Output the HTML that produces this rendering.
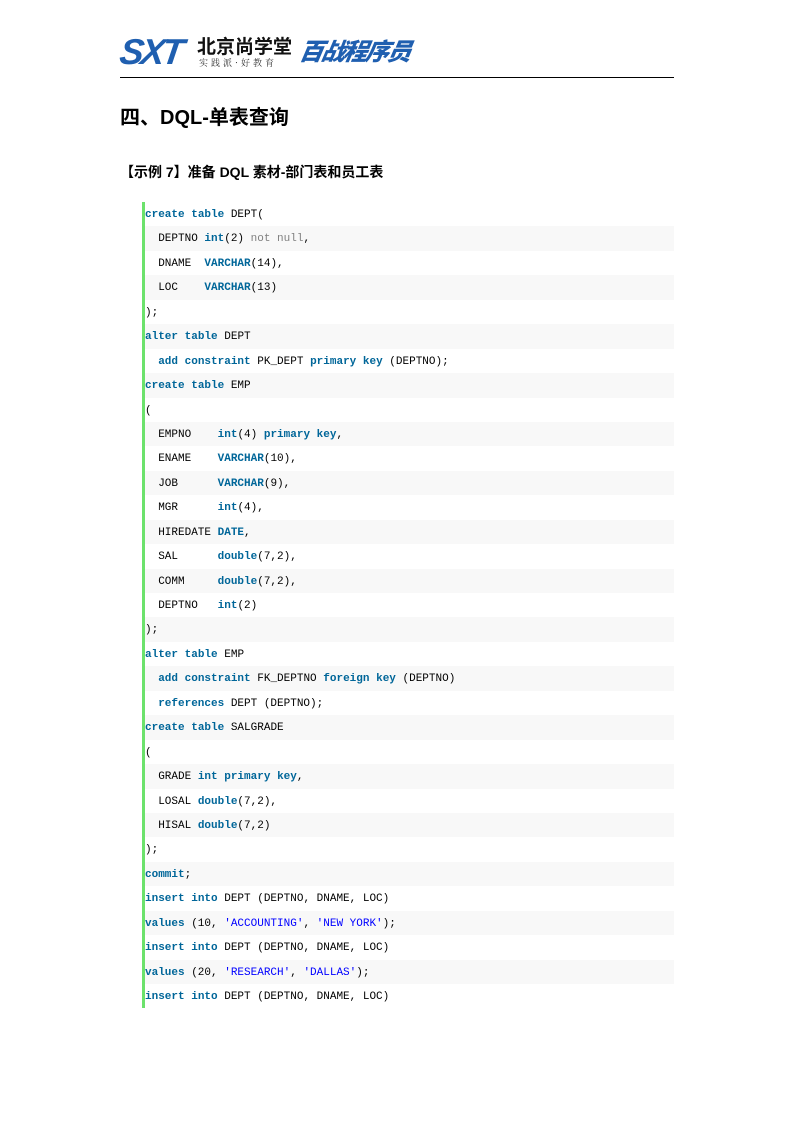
<!DOCTYPE html>
<html><head><meta charset="utf-8"><style>
body{margin:0;background:#fff;width:794px;height:1123px;position:relative;overflow:hidden;font-family:"Liberation Sans","Noto Sans CJK SC",sans-serif}
.hr{position:absolute;left:120px;top:77px;width:554px;height:1px;background:#000}
h1{position:absolute;left:120px;top:101px;margin:0;font-size:20px;font-weight:bold;color:#000}
h2{position:absolute;left:120px;top:162px;margin:0;font-size:14px;font-weight:bold;color:#000}
.code{position:absolute;left:142px;top:202px;width:529px;border-left:3px solid #6ce26c;font-family:"Liberation Mono",monospace;font-size:11px;color:#000}
.code div{height:24.44px;line-height:24.44px;white-space:pre;padding-top:1px;box-sizing:border-box}
.code div:nth-child(even){background:#f8f8f8}
.k{color:#006699;font-weight:bold}.s{color:#0000ff}.g{color:#808080}
</style></head><body>
<div style="position:absolute;left:120px;top:33px;font-size:36px;font-weight:900;font-style:italic;color:#1f5fb0;letter-spacing:-3px;line-height:38px;transform:skewX(-8deg)">SXT</div>
<div style="position:absolute;left:197px;top:35px;font-size:19px;font-weight:bold;color:#111;font-family:'Noto Sans CJK SC',sans-serif;line-height:22px">北京尚学堂</div>
<div style="position:absolute;left:199px;top:58px;font-size:9px;color:#333;font-family:'Noto Serif CJK SC',serif;letter-spacing:3px;line-height:10px">实践派·好教育</div>
<div style="position:absolute;left:300px;top:35px;font-size:24px;font-weight:900;font-style:italic;color:#1f5fb0;font-family:'Noto Sans CJK SC',sans-serif;line-height:30px;transform:skewX(-10deg);letter-spacing:-2px">百战程序员</div>
<div class="hr"></div>
<h1>四、DQL-单表查询</h1>
<h2>【示例 7】准备 DQL 素材-部门表和员工表</h2>
<div class="code">
<div><span class="k">create</span> <span class="k">table</span> DEPT(</div>
<div>  DEPTNO <span class="k">int</span>(2) <span class="g">not null</span>,</div>
<div>  DNAME  <span class="k">VARCHAR</span>(14),</div>
<div>  LOC    <span class="k">VARCHAR</span>(13)</div>
<div>);</div>
<div><span class="k">alter</span> <span class="k">table</span> DEPT</div>
<div>  <span class="k">add</span> <span class="k">constraint</span> PK_DEPT <span class="k">primary</span> <span class="k">key</span> (DEPTNO);</div>
<div><span class="k">create</span> <span class="k">table</span> EMP</div>
<div>(</div>
<div>  EMPNO    <span class="k">int</span>(4) <span class="k">primary</span> <span class="k">key</span>,</div>
<div>  ENAME    <span class="k">VARCHAR</span>(10),</div>
<div>  JOB      <span class="k">VARCHAR</span>(9),</div>
<div>  MGR      <span class="k">int</span>(4),</div>
<div>  HIREDATE <span class="k">DATE</span>,</div>
<div>  SAL      <span class="k">double</span>(7,2),</div>
<div>  COMM     <span class="k">double</span>(7,2),</div>
<div>  DEPTNO   <span class="k">int</span>(2)</div>
<div>);</div>
<div><span class="k">alter</span> <span class="k">table</span> EMP</div>
<div>  <span class="k">add</span> <span class="k">constraint</span> FK_DEPTNO <span class="k">foreign</span> <span class="k">key</span> (DEPTNO)</div>
<div>  <span class="k">references</span> DEPT (DEPTNO);</div>
<div><span class="k">create</span> <span class="k">table</span> SALGRADE</div>
<div>(</div>
<div>  GRADE <span class="k">int</span> <span class="k">primary</span> <span class="k">key</span>,</div>
<div>  LOSAL <span class="k">double</span>(7,2),</div>
<div>  HISAL <span class="k">double</span>(7,2)</div>
<div>);</div>
<div><span class="k">commit</span>;</div>
<div><span class="k">insert</span> <span class="k">into</span> DEPT (DEPTNO, DNAME, LOC)</div>
<div><span class="k">values</span> (10, <span class="s">'ACCOUNTING'</span>, <span class="s">'NEW YORK'</span>);</div>
<div><span class="k">insert</span> <span class="k">into</span> DEPT (DEPTNO, DNAME, LOC)</div>
<div><span class="k">values</span> (20, <span class="s">'RESEARCH'</span>, <span class="s">'DALLAS'</span>);</div>
<div><span class="k">insert</span> <span class="k">into</span> DEPT (DEPTNO, DNAME, LOC)</div>
</div>
</body></html>
